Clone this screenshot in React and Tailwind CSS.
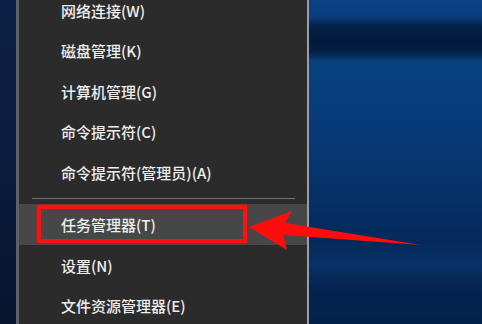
const items = [
  "网络连接(W)",
  "磁盘管理(K)",
  "计算机管理(G)",
  "命令提示符(C)",
  "命令提示符(管理员)(A)",
];

const lower = ["设置(N)", "文件资源管理器(E)"];

function MenuRow({ label, children, className = "" }) {
  return (
    <div className={`relative h-[40.5px] shrink-0 flex items-center pl-[42px] ${className}`}>
      <span className="text-[15px] leading-none font-medium text-[#eeeeee]">{label}</span>
      {children}
    </div>
  );
}

export default function App() {
  return (
    <div
      className="relative w-[482px] h-[324px] overflow-hidden flex"
      style={{ fontFamily: '"Noto Sans CJK SC", "Noto Sans", sans-serif' }}
    >
      {/* desktop strip on the left */}
      <div className="w-[16px] h-full bg-[linear-gradient(180deg,#0c2147_0%,#0a1c3d_50%,#07152e_100%)]" />

      {/* context menu */}
      <div className="w-[293px] h-full bg-[#2b2b2b] border-l-[3px] border-[#5e6068] border-r-2 border-r-[#9a9da3] flex flex-col">
        <div className="-mt-[10.25px] flex flex-col">
          {items.map((t) => (
            <MenuRow key={t} label={t} />
          ))}

          {/* separator */}
          <div className="h-[11.75px] flex items-center pl-[13px] pr-[12px]">
            <div className="h-px w-full bg-[#707070]" />
          </div>

          {/* highlighted item */}
          <MenuRow label="任务管理器(T)" className="bg-[#474747] h-[41px]">
            <div className="absolute left-[18px] top-px w-[210px] h-[38px] border-[4px] border-[#ff1010] shadow-[0_0_2px_#ff0000]" />
          </MenuRow>

          {lower.map((t) => (
            <MenuRow key={t} label={t} />
          ))}
        </div>
      </div>

      {/* desktop */}
      <div className="flex-1 h-full bg-[linear-gradient(180deg,#0b4185_0%,#0a3e80_5%,#04214a_8%,#031a3c_13%,#041f45_16%,#08407f_19%,#073a78_40%,#063168_60%,#05295a_75%,#083266_82%,#042552_88%,#03214a_100%)]" />

      {/* annotation arrow */}
      <svg
        className="absolute inset-0 pointer-events-none"
        width="482"
        height="324"
        viewBox="0 0 482 324"
      >
        <polygon
          points="249,227 292,211 285,223 421,245 283,235 287,250"
          fill="#ff0d0d"
        />
      </svg>
    </div>
  );
}
